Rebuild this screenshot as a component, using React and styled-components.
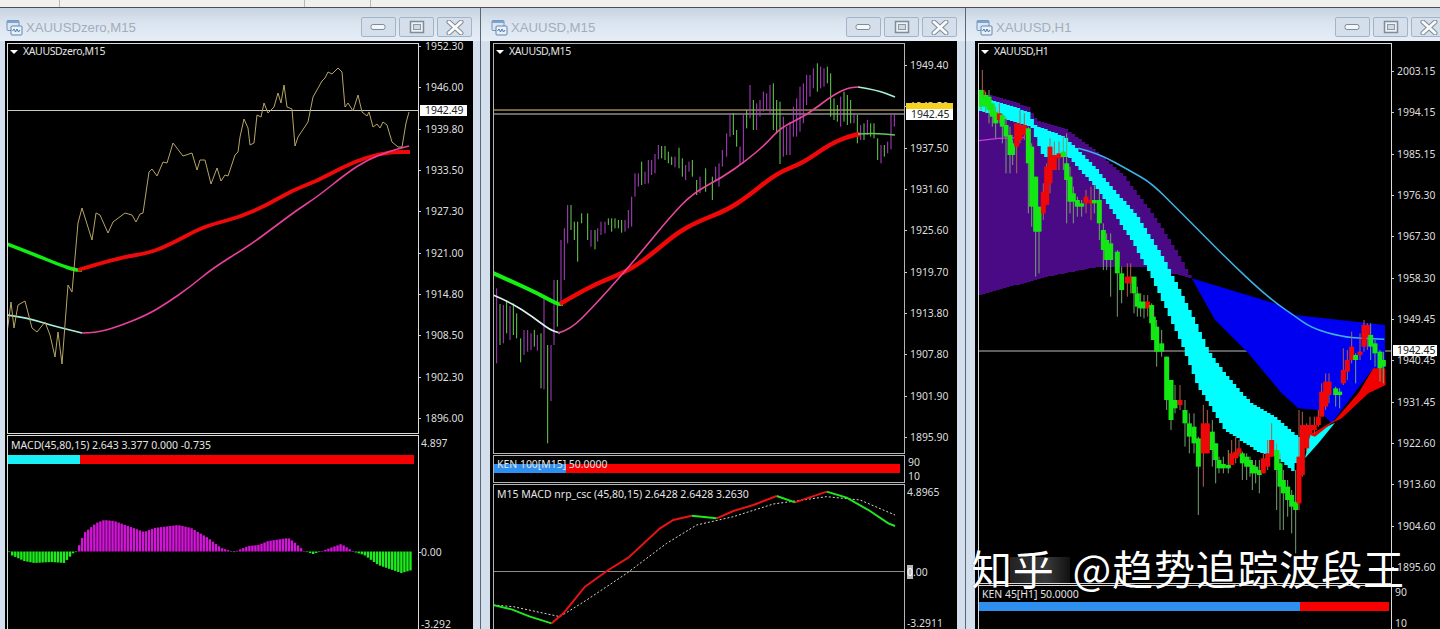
import React from "react";
import styled, { createGlobalStyle } from "styled-components";

const GlobalStyle = createGlobalStyle`
  html, body { margin: 0; padding: 0; background: #000; }
  body { font-family: "Noto Sans", "Liberation Sans", sans-serif; }
`;

const Screen = styled.div`
  position: relative;
  width: 1440px;
  height: 629px;
  overflow: hidden;
  background: #000;
`;
const TopStrip = styled.div`
  height: 7px;
  display: flex;
  background: #f1f0ec;
  border-bottom: 1px solid #4a4f55;
`;
const StripCell = styled.div`
  width: ${(p) => p.$w}px;
  border-right: 1px solid #b9b8b2;
`;
const Workspace = styled.div`
  display: flex;
  height: 621px;
`;
const Win = styled.section`
  flex: none;
  box-sizing: border-box;
  width: ${(p) => p.$w}px;
  display: flex;
  flex-direction: column;
  padding: 0 ${(p) => p.$right}px 0 ${(p) => p.$left}px;
  background: #d3dfec;
  border-right: 1px solid #5c6670;
`;
const TitleBar = styled.header`
  flex: none;
  box-sizing: border-box;
  height: 33px;
  display: flex;
  align-items: center;
  gap: 3px;
  margin: 0 -${(p) => p.$right}px 0 -${(p) => p.$left}px;
  padding: 5px 8px 0 ${(p) => p.$start}px;
  background: linear-gradient(#c6d3e1, #d9e3ee 40%, #e6eef7);
`;
const WinTitle = styled.h2`
  flex: 1;
  margin: 0;
  font: 400 13.2px "Liberation Sans", sans-serif;
  color: #a3adb9;
`;
const CtrlButton = styled.button`
  flex: none;
  width: 35px;
  height: 20px;
  padding: 0;
  display: flex;
  align-items: center;
  justify-content: center;
  background: #d4dfeb;
  border: 1px solid #a4b4c7;
  border-radius: 2px;
`;
const Body = styled.div`
  flex: 1;
  min-height: 0;
  display: flex;
  flex-direction: column;
  gap: 1px;
  padding: 2px 0 0 ${(p) => p.$inset}px;
  background: #000;
`;
const PaneRow = styled.div`
  flex: none;
  height: ${(p) => p.$h}px;
  display: flex;
`;
const Plot = styled.div`
  position: relative;
  flex: none;
  box-sizing: border-box;
  width: ${(p) => p.$w}px;
  border: 1px solid ${(p) => p.$line};
  background: #000;
`;
const ChartSvg = styled.svg`
  position: absolute;
  inset: 0;
  width: 100%;
  height: 100%;
  display: block;
`;
const PaneHead = styled.div`
  position: relative;
  display: flex;
  align-items: center;
  gap: 5px;
  padding: ${(p) => p.$top}px 0 0 ${(p) => p.$left}px;
  height: 13px;
  font-size: 10.5px;
  letter-spacing: ${(p) => p.$track || 0}px;
  line-height: 13px;
  color: #e4e4e4;
  white-space: nowrap;
`;
const KenLabel = styled.div`
  position: absolute;
  left: 3px;
  top: ${(p) => p.$top}px;
  font-size: 10.45px;
  line-height: 11px;
  color: #e4e4e4;
  white-space: nowrap;
`;
const Caret = styled.span`
  width: 0;
  height: 0;
  border-left: 4px solid transparent;
  border-right: 4px solid transparent;
  border-top: 4px solid #fff;
`;
const SignalBar = styled.div`
  position: relative;
  display: flex;
  height: 9px;
  margin-top: ${(p) => p.$top}px;
  width: ${(p) => p.$w}px;
`;
const Segment = styled.div`
  flex: none;
  width: ${(p) => p.$w}px;
  background: ${(p) => p.$color};
`;
const Axis = styled.div`
  position: relative;
  flex: 1;
  display: flex;
  flex-direction: column;
  margin-top: ${(p) => p.$offset}px;
  gap: ${(p) => p.$gap || 0}px;
`;
const AxisLabel = styled.div`
  position: relative;
  flex: none;
  height: 10px;
  margin-top: ${(p) => p.$mt || 0}px;
  padding-left: ${(p) => p.$pad}px;
  font-size: 10.4px;
  line-height: 10px;
  color: #dedede;
  white-space: nowrap;
  &::before {
    content: "";
    display: ${(p) => (p.$noTick ? "none" : "block")};
    position: absolute;
    left: 0;
    top: 5px;
    width: 2px;
    height: 1px;
    background: #cfcfcf;
  }
`;
const PriceTag = styled.div`
  position: absolute;
  left: 1px;
  top: ${(p) => p.$top}px;
  box-sizing: border-box;
  width: ${(p) => p.$w}px;
  height: ${(p) => p.$h}px;
  padding-left: ${(p) => p.$pad}px;
  background: ${(p) => p.$bg};
  font-size: 10.4px;
  line-height: 11px;
  color: #222;
`;
const ZeroBox = styled.span`
  background: #b9b9b9;
  color: #fff;
`;
const Watermark = styled.div`
  position: absolute;
  left: 971px;
  top: 546px;
  isolation: isolate;
  font: 400 41px "Noto Sans CJK SC", sans-serif;
  line-height: 43px;
  word-spacing: 8px;
  letter-spacing: 0.8px;
  color: #fff;
  white-space: pre;
  text-shadow: 0 0 1px rgba(0, 0, 0, 0.5);
  &::before {
    content: "";
    position: absolute;
    left: 39px;
    top: 11px;
    width: 60px;
    height: 26px;
    z-index: -1;
    background: linear-gradient(90deg, #222, #3a3a3a 60%, #111);
  }
`;

// straight-line lookup along a list of [x, y] points
const interp = (pts, x) => {
  if (x <= pts[0][0]) return pts[0][1];
  for (let i = 1; i < pts.length; i++) {
    if (x <= pts[i][0]) {
      const [x0, y0] = pts[i - 1];
      const [x1, y1] = pts[i];
      return y0 + ((y1 - y0) * (x - x0)) / (x1 - x0);
    }
  }
  return pts[pts.length - 1][1];
};
const line = (pts) => pts.map((p) => p.join(",")).join(" ");

// rounds the corners of a moving average, runs through the midpoints
const smooth = (pts) => {
  let d = `M${pts[0].join(" ")}`;
  for (let i = 1; i < pts.length - 1; i++) {
    const mx = (pts[i][0] + pts[i + 1][0]) / 2;
    const my = (pts[i][1] + pts[i + 1][1]) / 2;
    d += ` Q${pts[i].join(" ")} ${mx} ${my}`;
  }
  return `${d} L${pts[pts.length - 1].join(" ")}`;
};

// stepped cloud between two edges, the terminal draws these in whole bars
const stepBand = (top, bottom, from, to, step) => {
  const up = [];
  const down = [];
  for (let x = from; x < to; x += step) {
    const mid = x + step / 2;
    const a = Math.round(interp(top, mid));
    const b = Math.round(interp(bottom, mid));
    up.push(`${x},${a} ${x + step},${a}`);
    down.unshift(`${x + step},${b} ${x},${b}`);
  }
  return [...up, ...down].join(" ");
};

const MaLine = ({ pts, color, width }) => (
  <path d={smooth(pts)} fill="none" stroke={color} strokeWidth={width} />
);

/* ---------- left window ---------- */
const goldLine = [[7,333],[11,302],[14,328],[18,305],[25,301],[32,328],[37,332],[45,322],[50,335],[55,357],[58,332],[62,364],[68,285],[72,292],[78,223],[82,208],[92,240],[96,213],[100,215],[108,233],[113,222],[125,213],[132,215],[136,222],[140,214],[143,213],[149,172],[152,169],[157,176],[163,162],[167,163],[173,143],[183,156],[192,153],[197,170],[200,160],[205,160],[211,184],[217,168],[221,181],[225,175],[228,176],[235,155],[238,152],[240,137],[244,119],[248,128],[250,145],[254,143],[257,115],[261,117],[264,103],[268,113],[274,107],[278,93],[281,103],[284,85],[287,107],[292,109],[295,146],[298,137],[308,122],[313,97],[322,81],[325,78],[328,72],[332,74],[338,68],[342,72],[345,107],[348,103],[353,111],[358,95],[362,112],[367,116],[369,112],[373,127],[377,124],[380,128],[383,122],[387,125],[392,142],[398,147],[402,147],[406,123],[409,112]];
const leftFastGreen = [[7,244],[33,254],[60,265],[75,270],[82,270]];
const leftFastRed = [[78,270],[117,258],[150,253],[173,243],[197,230],[213,224],[240,217],[267,205],[293,190],[317,181],[343,167],[367,157],[390,152],[410,152]];
const leftSlowCyan = [[7,315],[28,318],[50,325],[70,330],[82,333]];
const leftSlowPink = [[82,333],[95,333],[117,327],[147,315],[167,303],[190,287],[213,268],[250,245],[273,228],[297,210],[317,197],[347,173],[367,160],[390,151],[409,146]];
const histPts = [[8,552],[10,555],[23,561],[33,563],[50,562],[63,563],[73,552],[76,552],[78,545],[83,533],[95,523],[103,520],[113,521],[127,526],[143,532],[153,528],[177,525],[190,528],[207,538],[220,548],[233,552],[247,546],[257,545],[267,541],[287,538],[293,542],[303,551],[312,554],[318,552],[340,544],[353,552],[363,555],[377,565],[400,573],[411,570]];
const histBars = Array.from({ length: 133 }, (_, i) => {
  const x = 8 + i * 3.04;
  return { x, y: interp(histPts, x) };
});

/* ---------- middle window ---------- */
const midFastGreen = [[493,273],[513,282],[537,293],[557,304],[563,304]];
const midFastRed = [[560,304],[587,288],[613,277],[633,268],[653,253],[677,233],[697,222],[727,210],[747,197],[777,173],[803,163],[830,144],[850,136],[860,134]];
const midFastTail = [[858,134],[873,133],[895,135]];
const midSlowWhite = [[493,295],[510,302],[533,317],[550,330],[560,333]];
const midSlowPink = [[558,333],[570,330],[593,307],[620,277],[643,250],[670,217],[693,193],[723,177],[747,160],[767,143],[780,128],[807,115],[830,97],[847,88],[858,87]];
const midSlowTail = [[858,87],[877,90],[895,97]];
// x and y in thirds of a pixel from the chart corner at 480,40, p = purple, g = green
const midBars = [[40,753,1028,"g"],[50,745,970,"p"],[60,792,915,"g"],[70,795,910,"p"],[80,780,880,"g"],[90,798,900,"p"],[100,790,885,"g"],[110,820,895,"g"],[122,895,967,"g"],[132,870,945,"p"],[143,870,935,"p"],[153,880,930,"p"],[163,870,920,"g"],[172,885,932,"p"],[183,880,1045,"g"],[192,775,1048,"p"],[203,915,1210,"g"],[213,915,1083,"p"],[222,720,915,"p"],[232,720,860,"g"],[243,600,790,"p"],[253,565,720,"p"],[263,495,610,"p"],[273,495,570,"g"],[283,545,600,"g"],[293,545,665,"g"],[305,520,550,"g"],[323,520,600,"g"],[333,570,620,"p"],[345,570,628,"g"],[353,565,605,"p"],[363,545,585,"p"],[375,545,580,"p"],[385,535,555,"g"],[395,535,575,"g"],[405,535,565,"g"],[415,540,565,"g"],[425,540,578,"g"],[435,540,575,"p"],[445,510,565,"p"],[455,470,560,"p"],[465,400,470,"p"],[475,400,440,"p"],[485,365,435,"g"],[495,395,432,"p"],[505,360,430,"p"],[515,360,405,"p"],[525,342,400,"p"],[535,315,358,"p"],[545,318,355,"g"],[555,318,360,"g"],[565,335,370,"g"],[575,350,375,"g"],[585,350,382,"p"],[597,323,385,"g"],[607,355,410,"g"],[617,375,420,"p"],[627,365,395,"p"],[637,360,410,"g"],[650,420,465,"g"],[660,410,460,"p"],[677,385,455,"g"],[697,410,480,"g"],[707,380,420,"p"],[717,370,440,"p"],[727,330,380,"p"],[740,280,350,"p"],[750,220,290,"p"],[760,220,285,"g"],[770,270,320,"g"],[780,320,375,"p"],[790,225,370,"p"],[800,210,265,"g"],[810,135,235,"p"],[820,180,270,"g"],[830,190,270,"p"],[840,180,230,"p"],[850,155,215,"p"],[860,160,210,"p"],[870,135,225,"p"],[880,130,270,"g"],[890,180,280,"g"],[900,185,372,"g"],[910,230,350,"p"],[920,260,345,"p"],[930,245,345,"p"],[940,200,290,"p"],[950,175,290,"p"],[960,140,275,"p"],[970,130,250,"p"],[980,105,195,"p"],[990,105,170,"p"],[1000,85,145,"p"],[1012,70,155,"g"],[1022,80,145,"p"],[1032,85,140,"p"],[1042,80,130,"g"],[1052,100,230,"g"],[1062,175,240,"g"],[1072,195,245,"g"],[1082,170,260,"p"],[1092,155,245,"g"],[1102,165,255,"g"],[1112,180,250,"g"],[1122,220,250,"p"],[1132,225,310,"g"],[1142,255,300,"p"],[1152,250,300,"g"],[1162,240,285,"p"],[1172,250,290,"g"],[1182,250,295,"g"],[1193,295,360,"g"],[1203,315,370,"p"],[1213,315,350,"g"],[1223,305,340,"p"],[1233,225,328,"p"],[1243,220,260,"p"]];

const toMacd = (pts) => pts.map(([x, y]) => [480 + x / 3, 330 + y / 3]);
const macdSegs = [
  ["#22e622", [[40,825],[95,838],[150,860],[215,880]]],
  ["#e81414", [[215,880],[250,850],[315,770],[385,720],[445,683],[540,595],[580,570],[635,557]]],
  ["#22e622", [[635,557],[680,562],[710,565]]],
  ["#e81414", [[710,565],[760,543],[820,525],[890,498]]],
  ["#22e622", [[890,498],[945,517]]],
  ["#e81414", [[945,517],[1040,485]]],
  ["#22e622", [[1040,485],[1100,503],[1170,543],[1225,580],[1245,588]]],
];
const macdSignal = [[40,825],[100,830],[240,860],[320,810],[440,730],[560,640],[650,585],[760,560],[880,522],[1040,500],[1140,510],[1245,555]];

/* ---------- right window ---------- */
// x in thirds of a pixel from 965, y in thirds of a pixel from the top of the page
const at = ([x, y]) => [965 + x / 3, y / 3];
const cyanTop = [[42,290],[100,305],[190,335],[210,375],[300,410],[390,500],[440,560],[520,650],[600,780],[650,880],[690,960],[730,1050],[780,1120],[860,1210],[930,1250],[1000,1310]].map(at);
const cyanBottom = [[42,330],[100,350],[200,380],[235,470],[310,470],[400,570],[500,720],[560,830],[605,930],[650,1030],[700,1160],[780,1290],[880,1355],[935,1370],[985,1415],[1000,1370]].map(at);
const purpleTop = [[42,280],[100,290],[190,320],[215,360],[300,385],[390,450],[480,530],[570,650],[640,760],[680,835]].map(at);
const purpleBottom = [[42,885],[250,830],[400,800],[540,800],[680,835]].map(at);
const blueTop = [[680,835],[945,915],[990,945],[1260,975]].map(at);
const blueBottom = [[680,835],[750,960],[850,1060],[950,1180],[1000,1225],[1060,1230],[1100,1270],[1225,1105],[1260,1105]].map(at);
const redBand = [[1035,1305],[1110,1260],[1180,1180],[1225,1105],[1260,1105],[1262,1155],[1210,1180],[1130,1255],[1100,1270],[1050,1310]].map(at);
const cyanTail = [[1020,1375],[1035,1305],[1110,1268],[1060,1330]].map(at);
const skyLine = [[340,445],[400,460],[500,515],[560,550],[630,620],[700,690],[800,790],[880,865],[940,915],[985,945],[1040,985],[1130,1010],[1190,1015],[1258,1018]].map(at);
const violetLine = [[42,422],[100,415],[180,412]].map(at);
// x, wick top, wick bottom, body top, body bottom, r = red, g = green
const hourCandles = [[52,210,290,270,290,"r"],[48,270,330,270,320,"g"],[62,275,340,285,320,"g"],[72,270,370,290,330,"g"],[82,310,380,310,350,"g"],[92,320,415,335,370,"g"],[103,310,370,340,360,"r"],[112,340,430,345,380,"g"],[123,350,520,375,410,"g"],[135,380,520,405,465,"g"],[143,420,495,430,465,"g"],[155,370,520,370,440,"r"],[165,330,430,375,420,"r"],[178,340,420,375,405,"r"],[190,380,640,385,490,"g"],[200,430,680,440,620,"g"],[212,530,830,530,695,"g"],[222,620,820,620,695,"g"],[235,550,660,575,640,"r"],[245,490,600,500,615,"r"],[255,415,580,440,550,"r"],[268,425,490,465,510,"r"],[282,425,510,460,475,"r"],[295,410,510,455,470,"g"],[305,400,670,490,540,"g"],[315,500,640,530,605,"g"],[325,560,670,580,605,"g"],[337,590,650,600,620,"g"],[350,600,650,610,620,"g"],[363,570,640,590,610,"r"],[378,560,660,600,610,"r"],[388,555,640,600,610,"g"],[403,570,720,600,670,"g"],[415,670,810,690,750,"g"],[425,700,810,720,780,"g"],[437,700,890,730,780,"g"],[457,750,950,755,820,"g"],[470,800,910,820,870,"g"],[487,790,890,830,850,"r"],[497,790,880,830,850,"r"],[507,830,940,830,880,"g"],[517,860,950,880,920,"g"],[527,880,950,905,925,"g"],[537,885,955,905,925,"g"],[548,885,950,905,925,"r"],[560,910,1020,915,970,"g"],[565,930,1020,950,1020,"g"],[575,960,1100,980,1055,"g"],[590,990,1070,1030,1055,"g"],[605,1070,1230,1070,1200,"g"],[618,1140,1290,1140,1260,"g"],[630,1155,1240,1200,1225,"g"],[645,1155,1230,1200,1215,"r"],[660,1200,1340,1230,1270,"g"],[673,1240,1360,1270,1310,"g"],[687,1240,1360,1280,1330,"g"],[700,1310,1545,1315,1400,"g"],[715,1215,1460,1270,1360,"r"],[727,1230,1360,1270,1360,"r"],[742,1260,1400,1295,1350,"g"],[752,1330,1450,1330,1380,"g"],[762,1370,1420,1380,1405,"g"],[775,1370,1420,1392,1405,"g"],[790,1350,1420,1395,1405,"g"],[800,1320,1390,1360,1395,"r"],[812,1310,1390,1355,1375,"r"],[822,1320,1370,1345,1360,"r"],[832,1355,1440,1360,1390,"g"],[845,1360,1440,1370,1400,"g"],[855,1370,1430,1380,1400,"g"],[862,1380,1470,1395,1420,"g"],[872,1380,1450,1400,1420,"g"],[883,1380,1480,1410,1425,"g"],[895,1360,1420,1375,1420,"r"],[908,1320,1410,1360,1400,"r"],[920,1270,1370,1320,1370,"r"],[935,1330,1530,1350,1410,"g"],[945,1360,1590,1390,1460,"g"],[955,1410,1590,1440,1480,"g"],[968,1440,1550,1460,1500,"g"],[980,1470,1600,1485,1520,"g"],[992,1410,1660,1505,1530,"g"],[1002,1230,1530,1370,1510,"r"],[1012,1235,1430,1275,1425,"r"],[1025,1270,1360,1275,1345,"r"],[1035,1250,1310,1275,1305,"r"],[1048,1250,1300,1275,1290,"r"],[1060,1230,1280,1250,1275,"r"],[1070,1150,1250,1175,1250,"r"],[1082,1120,1230,1145,1220,"r"],[1092,1120,1210,1145,1185,"r"],[1112,1160,1220,1165,1185,"g"],[1124,1165,1225,1175,1185,"g"],[1135,1045,1155,1110,1150,"r"],[1147,1050,1140,1080,1115,"r"],[1160,995,1090,1040,1080,"r"],[1172,1060,1150,1065,1080,"g"],[1185,1000,1080,1055,1065,"r"],[1197,960,1055,975,1040,"r"],[1207,970,1050,975,1010,"r"],[1217,970,1080,1005,1040,"g"],[1230,1020,1100,1030,1060,"g"],[1245,1050,1145,1055,1105,"g"],[1255,1055,1150,1080,1100,"g"]];

const mainLeft = ["1952.30","1946.00","1939.80","1933.50","1927.30","1921.00","1914.80","1908.50","1902.30","1896.00"];
const mainMid = ["1949.40","1943.50","1937.50","1931.60","1925.60","1919.70","1913.80","1907.80","1901.90","1895.90"];
const mainRight = ["2003.15","1994.15","1985.15","1976.30","1967.30","1958.30","1949.45","1940.45","1931.45","1922.60","1913.60","1904.60","1895.60"];

const WindowIcon = () => (
  <svg width="17" height="17" viewBox="0 0 17 17">
    <rect x="1" y="1.5" width="12" height="10" rx="1" fill="#dbe6f2" stroke="#6f93ba" />
    <rect x="1" y="1.5" width="12" height="2.5" fill="#7fa3cc" />
    <rect x="5" y="7" width="11" height="9" rx="1" fill="#e9f0f8" stroke="#5d86b4" />
    <path d="M6.5 12 l1.5 -2 l1.5 3 l1.5 -3 l1.5 3 l1.5 -2" fill="none" stroke="#4d79ab" />
  </svg>
);

const MinIcon = () => (
  <svg width="17" height="8" viewBox="0 0 17 8">
    <rect x="1" y="1.5" width="14" height="5" rx="2" fill="#f4f7fa" stroke="#7f8b98" />
  </svg>
);
const MaxIcon = () => (
  <svg width="16" height="14" viewBox="0 0 16 14">
    <rect x="1.5" y="1.5" width="13" height="11" fill="#eef2f6" stroke="#7f8b98" strokeWidth="1.5" />
    <rect x="4.5" y="4.5" width="7" height="5" fill="#cfd9e4" stroke="#8c98a5" />
  </svg>
);
const CloseIcon = () => (
  <svg width="18" height="15" viewBox="0 0 18 15">
    <path d="M3 2 L15 13 M15 2 L3 13" stroke="#7f8b98" strokeWidth="5" strokeLinecap="round" />
    <path d="M3 2 L15 13 M15 2 L3 13" stroke="#fafbfc" strokeWidth="3" strokeLinecap="round" />
  </svg>
);

const Window = ({ title, w, left, right, inset, children }) => (
  <Win $w={w} $left={left} $right={right}>
    <TitleBar $left={left} $right={right} $start={left + 1}>
      <WindowIcon />
      <WinTitle>{title}</WinTitle>
      <CtrlButton aria-label="minimize"><MinIcon /></CtrlButton>
      <CtrlButton aria-label="maximize"><MaxIcon /></CtrlButton>
      <CtrlButton aria-label="close"><CloseIcon /></CtrlButton>
    </TitleBar>
    <Body $inset={inset}>{children}</Body>
  </Win>
);

// the svg works in page pixels so the plotted points read like the screenshot
const Pane = ({ x, y, w, h, line: lineColor = "#dcdcdc", axis, children, head }) => (
  <PaneRow $h={h}>
    <Plot $w={w} $line={lineColor}>
      <ChartSvg viewBox={`${x + 1} ${y + 1} ${w - 2} ${h - 2}`}>{children}</ChartSvg>
      {head}
    </Plot>
    {axis}
  </PaneRow>
);

const PriceAxis = ({ offset, values, pad, children }) => (
  <Axis $offset={offset} $gap={31.33}>
    {values.map((v) => (
      <AxisLabel key={v} $pad={pad}>{v}</AxisLabel>
    ))}
    {children}
  </Axis>
);

const LeftWindow = () => (
  <Window title="XAUUSDzero,M15" w={481} left={5} right={7} inset={2}>
    <Pane
      x={7} y={43} w={412} h={391}
      head={<PaneHead $top={1} $left={2} $track={-0.38}><Caret />XAUUSDzero,M15</PaneHead>}
      axis={
        <PriceAxis offset={-2} values={mainLeft} pad={6}>
          <PriceTag $top={64} $w={47} $h={11} $pad={5} $bg="#fff">1942.49</PriceTag>
        </PriceAxis>
      }
    >
      <line x1="7" y1="110.5" x2="418" y2="110.5" stroke="#c9c9bd" />
      <MaLine pts={leftFastGreen} color="#12ee12" width="3.5" />
      <MaLine pts={leftFastRed} color="#ee0a0a" width="3.8" />
      <MaLine pts={leftSlowCyan} color="#a8f0dc" width="1.6" />
      <MaLine pts={leftSlowPink} color="#e8409c" width="1.6" />
      <polyline points={line(goldLine)} fill="none" stroke="#b7a566" strokeWidth="1" />
    </Pane>
    <Pane
      x={7} y={435} w={412} h={200}
      head={
        <>
          <PaneHead $top={3} $left={3}>MACD(45,80,15) 2.643 3.377 0.000 -0.735</PaneHead>
          <SignalBar $top={3} $w={406}>
            <Segment $w={72} $color="#19f0f5" />
            <Segment $w={334} $color="#f40000" />
          </SignalBar>
        </>
      }
      axis={
        <Axis $offset={3}>
          <AxisLabel $pad={2} $noTick>4.897</AxisLabel>
          <AxisLabel $pad={2} $mt={99}>0.00</AxisLabel>
          <AxisLabel $pad={2} $mt={62} $noTick>-3.292</AxisLabel>
        </Axis>
      }
    >
      {histBars.map(({ x, y }) => (
        <rect
          key={x}
          x={x}
          y={Math.min(y, 551.5)}
          width="2.4"
          height={Math.max(Math.abs(y - 551.5), 0.6)}
          fill={y > 551.5 ? "#1cec1c" : "#d414d8"}
        />
      ))}
    </Pane>
  </Window>
);

const MiddleWindow = () => (
  <Window title="XAUUSD,M15" w={485} left={9} right={8} inset={3}>
    <Pane
      x={493} y={43} w={412} h={411} line="#b5b5b5"
      head={<PaneHead $top={1} $left={2} $track={-0.38}><Caret />XAUUSD,M15</PaneHead>}
      axis={
        <PriceAxis offset={17} values={mainMid} pad={5}>
          <PriceTag $top={43} $w={47} $h={7} $pad={5} $bg="#f6d21c" />
          <PriceTag $top={49} $w={47} $h={11} $pad={5} $bg="#fff">1942.45</PriceTag>
        </PriceAxis>
      }
    >
      <line x1="493" y1="110" x2="905" y2="110" stroke="#9c8a55" strokeWidth="1.4" />
      <line x1="493" y1="114" x2="905" y2="114" stroke="#d0d0d0" />
      {midBars.map(([x, top, bottom, kind]) => (
        <line
          key={`${x}-${top}`}
          x1={480 + x / 3}
          x2={480 + x / 3}
          y1={40 + top / 3}
          y2={40 + bottom / 3}
          stroke={kind === "g" ? "#68d050" : "#b040c8"}
        />
      ))}
      <MaLine pts={midFastGreen} color="#14f014" width="4" />
      <MaLine pts={midFastRed} color="#f00808" width="4.5" />
      <MaLine pts={midFastTail} color="#62c858" width="1.4" />
      <MaLine pts={midSlowWhite} color="#d8f4ee" width="1.6" />
      <MaLine pts={midSlowPink} color="#e8489c" width="1.6" />
      <MaLine pts={midSlowTail} color="#a8f0dc" width="1.6" />
    </Pane>
    <Pane
      x={493} y={455} w={412} h={28} line="#b5b5b5"
      head={
        <>
          <SignalBar $top={8} $w={406}>
            <Segment $w={72} $color="#2f8fee" />
            <Segment $w={334} $color="#f90000" />
          </SignalBar>
          <KenLabel $top={3}>KEN 100[M15] 50.0000</KenLabel>
        </>
      }
      axis={
        <Axis $offset={2}>
          <AxisLabel $pad={3} $noTick>90</AxisLabel>
          <AxisLabel $pad={3} $mt={3.5} $noTick>10</AxisLabel>
        </Axis>
      }
    />
    <Pane
      x={493} y={484} w={412} h={200} line="#b5b5b5"
      head={<PaneHead $top={3} $left={3}>M15 MACD nrp_csc (45,80,15) 2.6428 2.6428 3.2630</PaneHead>}
      axis={
        <Axis $offset={3}>
          <AxisLabel $pad={2} $noTick>4.8965</AxisLabel>
          <AxisLabel $pad={2} $mt={70} $noTick><ZeroBox>0</ZeroBox>.00</AxisLabel>
          <AxisLabel $pad={2} $mt={41} $noTick>-3.2911</AxisLabel>
        </Axis>
      }
    >
      <line x1="493" y1="571.5" x2="905" y2="571.5" stroke="#8c8c8c" />
      <polyline points={line(toMacd(macdSignal))} fill="none" stroke="#d8d8c8" strokeWidth="1" strokeDasharray="2 2" />
      {macdSegs.map(([color, pts]) => (
        <polyline key={pts[0][0]} points={line(toMacd(pts))} fill="none" stroke={color} strokeWidth="2" />
      ))}
    </Pane>
  </Window>
);

const RightWindow = () => (
  <Window title="XAUUSD,H1" w={489} left={9} right={8} inset={3}>
    <Pane
      x={978} y={43} w={414} h={541}
      head={<PaneHead $top={1} $left={2} $track={-0.38}><Caret />XAUUSD,H1</PaneHead>}
      axis={
        <PriceAxis offset={23} values={mainRight} pad={5}>
          <PriceTag $top={279} $w={44} $h={11} $pad={4} $bg="#fff">1942.45</PriceTag>
        </PriceAxis>
      }
    >
      <line x1="978" y1="351" x2="1392" y2="351" stroke="#bdbdbd" />
      <polygon points={stepBand(purpleTop, purpleBottom, 979, 1192, 3.43)} fill="#4a0a86" />
      <polygon points={[...blueTop, ...[...blueBottom].reverse()].map((p) => p.join(",")).join(" ")} fill="#0000f0" />
      <polyline points={line(violetLine)} fill="none" stroke="#c83cd8" strokeWidth="1.4" />
      <polygon points={stepBand(cyanTop, cyanBottom, 979, 1298, 3.43)} fill="#00ffff" />
      <polygon points={line(cyanTail)} fill="#00ffff" />
      <polygon points={line(redBand)} fill="#f20000" />
      <MaLine pts={skyLine} color="#3cb4ea" width="1.5" />
      {hourCandles.map(([zx, wickTop, wickBottom, top, bottom, kind]) => {
        const [x] = at([zx, 0]);
        const fill = kind === "g" ? "#14e814" : "#f00808";
        return (
          <g key={`${zx}-${wickTop}`}>
            <line x1={x} x2={x} y1={wickTop / 3} y2={wickBottom / 3} stroke={kind === "g" ? "#74a070" : "#b06050"} />
            <rect x={x - 2.5} y={top / 3} width="5" height={(bottom - top) / 3} fill={fill} />
          </g>
        );
      })}
    </Pane>
    <Pane
      x={978} y={585} w={414} h={80}
      head={
        <>
          <KenLabel $top={3}>KEN 45[H1] 50.0000</KenLabel>
          <SignalBar $top={16} $w={410}>
            <Segment $w={321} $color="#2f8fee" />
            <Segment $w={89} $color="#f60000" />
          </SignalBar>
        </>
      }
      axis={
        <Axis $offset={2}>
          <AxisLabel $pad={3} $noTick>90</AxisLabel>
          <AxisLabel $pad={3} $mt={21} $noTick>10</AxisLabel>
        </Axis>
      }
    />
  </Window>
);

const App = () => (
  <Screen>
    <GlobalStyle />
    <TopStrip>
      <StripCell $w={59} />
      <StripCell $w={244} />
      <StripCell $w={65} />
    </TopStrip>
    <Workspace>
      <LeftWindow />
      <MiddleWindow />
      <RightWindow />
    </Workspace>
    <Watermark>知乎 @趋势追踪波段王</Watermark>
  </Screen>
);

export default App;
